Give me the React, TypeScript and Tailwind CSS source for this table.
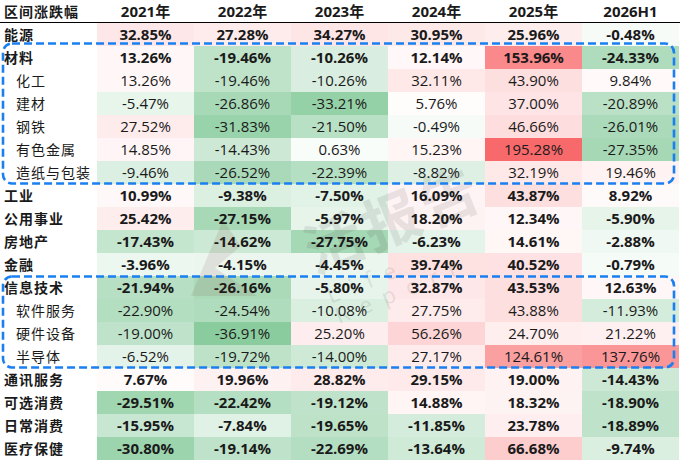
const years = ["2021年", "2022年", "2023年", "2024年", "2025年", "2026H1"];

type Row = { name: string; sub?: boolean; values: number[] };

const rows: Row[] = [
  { name: "能源", values: [32.85, 27.28, 34.27, 30.95, 25.96, -0.48] },
  { name: "材料", values: [13.26, -19.46, -10.26, 12.14, 153.96, -24.33] },
  { name: "化工", sub: true, values: [13.26, -19.46, -10.26, 32.11, 43.9, 9.84] },
  { name: "建材", sub: true, values: [-5.47, -26.86, -33.21, 5.76, 37.0, -20.89] },
  { name: "钢铁", sub: true, values: [27.52, -31.83, -21.5, -0.49, 46.66, -26.01] },
  { name: "有色金属", sub: true, values: [14.85, -14.43, 0.63, 15.23, 195.28, -27.35] },
  { name: "造纸与包装", sub: true, values: [-9.46, -26.52, -22.39, -8.82, 32.19, 19.46] },
  { name: "工业", values: [10.99, -9.38, -7.5, 16.09, 43.87, 8.92] },
  { name: "公用事业", values: [25.42, -27.15, -5.97, 18.2, 12.34, -5.9] },
  { name: "房地产", values: [-17.43, -14.62, -27.75, -6.23, 14.61, -2.88] },
  { name: "金融", values: [-3.96, -4.15, -4.45, 39.74, 40.52, -0.79] },
  { name: "信息技术", values: [-21.94, -26.16, -5.8, 32.87, 43.53, 12.63] },
  { name: "软件服务", sub: true, values: [-22.9, -24.54, -10.08, 27.75, 43.88, -11.93] },
  { name: "硬件设备", sub: true, values: [-19.0, -36.91, 25.2, 56.26, 24.7, 21.22] },
  { name: "半导体", sub: true, values: [-6.52, -19.72, -14.0, 27.17, 124.61, 137.76] },
  { name: "通讯服务", values: [7.67, 19.96, 28.82, 29.15, 19.0, -14.43] },
  { name: "可选消费", values: [-29.51, -22.42, -19.12, 14.88, 18.32, -18.9] },
  { name: "日常消费", values: [-15.95, -7.84, -19.65, -11.85, 23.78, -18.89] },
  { name: "医疗保健", values: [-30.8, -19.14, -22.69, -13.64, 66.68, -9.74] },
];

// 三色刻度：绿 - 白 - 红
const MID = 2.5;
const MAX = 195.28;
const MIN = -36.91;
const RED = [248, 105, 107];
const GREEN = [138, 204, 158];

function cellColor(v: number) {
  let t = 0;
  let end = RED;
  if (v >= MID) {
    t = Math.min(1, (v - MID) / (MAX - MID));
  } else {
    t = Math.min(1, (MID - v) / (MID - MIN));
    end = GREEN;
  }
  const mix = end.map((c) => Math.round(255 + (c - 255) * t));
  return `rgb(${mix[0]}, ${mix[1]}, ${mix[2]})`;
}

const fmt = (v: number) => `${v.toFixed(2)}%`;

function DashedBox({ top, height }: { top: number; height: number }) {
  return (
    <svg
      className="absolute left-0 pointer-events-none"
      style={{ top }}
      width={680}
      height={height + 4}
    >
      <rect
        x={3}
        y={1.5}
        width={671}
        height={height}
        rx={9}
        fill="none"
        stroke="#1a7ff0"
        strokeWidth={2.6}
        strokeDasharray="8 4"
      />
    </svg>
  );
}

function Watermark() {
  return (
    <div className="absolute left-[185px] top-[172px] w-[320px] h-[135px] pointer-events-none opacity-[0.09]">
      <svg className="absolute left-0 top-[30px]" width={80} height={100} viewBox="0 0 80 100">
        <path d="M6 94 L38 18 L56 44 L30 66 L72 94 Z" fill="#6a1e1e" />
      </svg>
      <div className="absolute left-[115px] top-[18px] -rotate-[22deg] text-[58px] font-bold text-[#222] leading-none tracking-[4px]">
        活报告
      </div>
      <div className="absolute left-[140px] top-[78px] -rotate-[22deg] text-[22px] text-[#222] tracking-[12px] leading-none">
        Life Report
      </div>
    </div>
  );
}

export default function App() {
  return (
    <div
      className="relative w-[680px] h-[461px] overflow-hidden bg-white text-[#1a1a1a]"
      style={{ fontFamily: '"Open Sans", "Noto Sans CJK SC", sans-serif' }}
    >
      <div className="grid grid-cols-[97px_repeat(6,97px)] h-[23px] border-b-[1.5px] border-black items-center text-[15px] font-bold">
        <div className="pl-[4px] text-[14px] tracking-[1px]">区间涨跌幅</div>
        {years.map((y) => (
          <div key={y} className="text-center">
            {y}
          </div>
        ))}
      </div>

      {rows.map((row) => (
        <div
          key={row.name}
          className={`grid grid-cols-[97px_repeat(6,97px)] h-[23px] items-stretch text-[15px] ${
            row.sub ? "font-normal" : "font-bold"
          }`}
        >
          <div
            className={`flex items-center text-[14px] tracking-[1px] ${row.sub ? "pl-[16px]" : "pl-[4px]"}`}
          >
            {row.name}
          </div>
          {row.values.map((v, i) => (
            <div
              key={i}
              className="flex items-center justify-center"
              style={{ backgroundColor: cellColor(v) }}
            >
              {fmt(v)}
            </div>
          ))}
        </div>
      ))}

      <Watermark />
      <DashedBox top={42} height={140} />
      <DashedBox top={275} height={91} />
    </div>
  );
}
